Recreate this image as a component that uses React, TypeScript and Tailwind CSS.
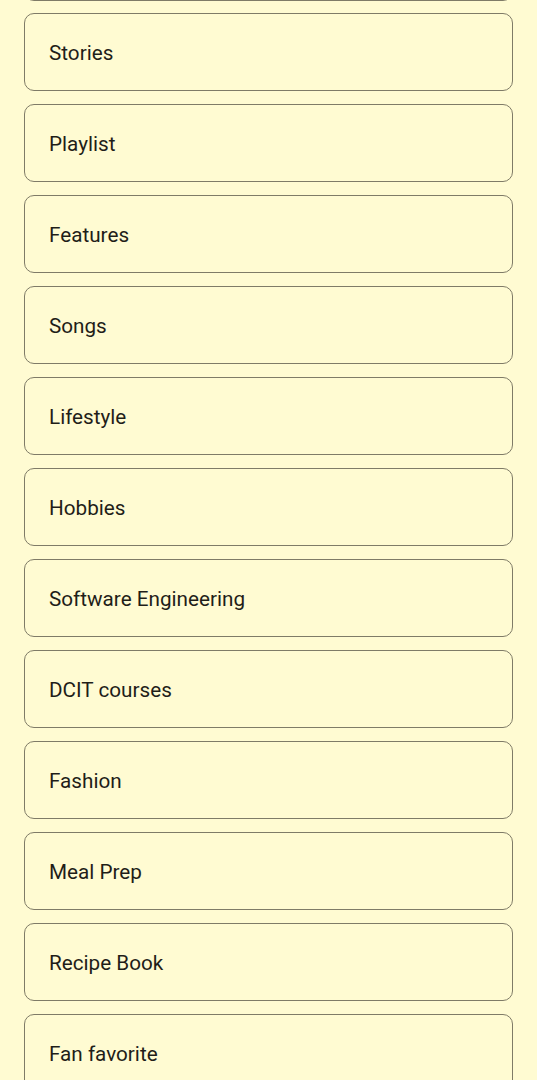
const items = [
  'Stories',
  'Playlist',
  'Features',
  'Songs',
  'Lifestyle',
  'Hobbies',
  'Software Engineering',
  'DCIT courses',
  'Fashion',
  'Meal Prep',
  'Recipe Book',
  'Fan favorite',
];

function Card({ label, className = '' }: { label: string; className?: string }) {
  return (
    <div
      className={`flex h-[78px] shrink-0 items-center rounded-[10px] border-[1.5px] border-[#7f7b67] pl-[24px] pr-[25px] pt-[4px] text-[20.7px] text-[#1f1e19] ${className}`}
    >
      {label}
    </div>
  );
}

export default function App() {
  return (
    <div
      className="h-[1080px] overflow-hidden bg-[#fffbd2] px-[24px]"
      style={{ fontFamily: 'Roboto, "Noto Sans", sans-serif' }}
    >
      <div className="flex flex-col gap-[13px]">
        <Card label="" className="-mt-[77px] -mb-[1px]" />
        {items.map((item) => (
          <Card key={item} label={item} />
        ))}
      </div>
    </div>
  );
}
